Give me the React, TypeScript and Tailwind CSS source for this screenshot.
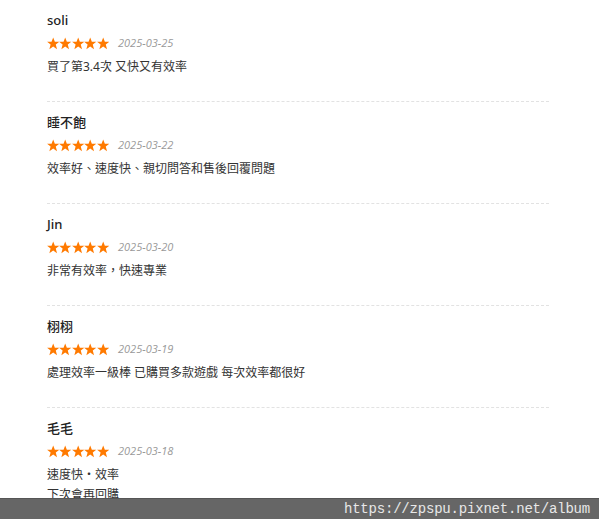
const reviews = [
  { name: "soli", date: "2025-03-25", lines: ["買了第3.4次 又快又有效率"] },
  { name: "睡不飽", date: "2025-03-22", lines: ["效率好、速度快、親切問答和售後回覆問題"] },
  { name: "Jin", date: "2025-03-20", lines: ["非常有效率，快速專業"] },
  { name: "栩栩", date: "2025-03-19", lines: ["處理效率一級棒 已購買多款遊戲 每次效率都很好"] },
  { name: "毛毛", date: "2025-03-18", lines: ["速度快・效率", "下次會再回購"] },
];

function Star() {
  return (
    <svg viewBox="0 0 24 24" className="h-[13px] w-[12.4px]">
      <polygon
        points="12,0.5 15.2,8.4 23.8,8.7 17,14 19.4,23 12,17.9 4.6,23 7,14 0.2,8.7 8.8,8.4"
        fill="#ff7a00"
      />
    </svg>
  );
}

export default function App() {
  return (
    <div className="min-h-screen bg-white font-['Noto_Sans','Noto_Sans_CJK_TC',sans-serif] text-[#333]">
      <div className="w-[502px] ml-[47px]">
        {reviews.map((r, i) => (
          <div
            key={i}
            className="pt-[10px] pb-[24px] border-b border-dashed border-[#e2e2e2]"
          >
            <div className="h-[20px] leading-[20px] text-[13px] font-medium text-[#222]">{r.name}</div>
            <div className="h-[27px] flex items-center">
              <div className="flex">
                <Star />
                <Star />
                <Star />
                <Star />
                <Star />
              </div>
              <span className="ml-[9px] text-[11px] italic text-[#999] font-['Open_Sans',sans-serif]">
                {r.date}
              </span>
            </div>
            {r.lines.map((l, j) => (
              <div key={j} className="h-[20px] leading-[20px] text-[12px] text-[#333]">
                {l}
              </div>
            ))}
          </div>
        ))}
      </div>
      <div className="fixed bottom-0 left-0 right-0 h-[21px] bg-[#666] border-t border-[#555] flex items-center justify-end pr-[9px]">
        <span className="font-['Liberation_Mono',monospace] text-[14px] text-[#e8e8e8] tracking-[-0.2px]">
          https://zpspu.pixnet.net/album
        </span>
      </div>
    </div>
  );
}
